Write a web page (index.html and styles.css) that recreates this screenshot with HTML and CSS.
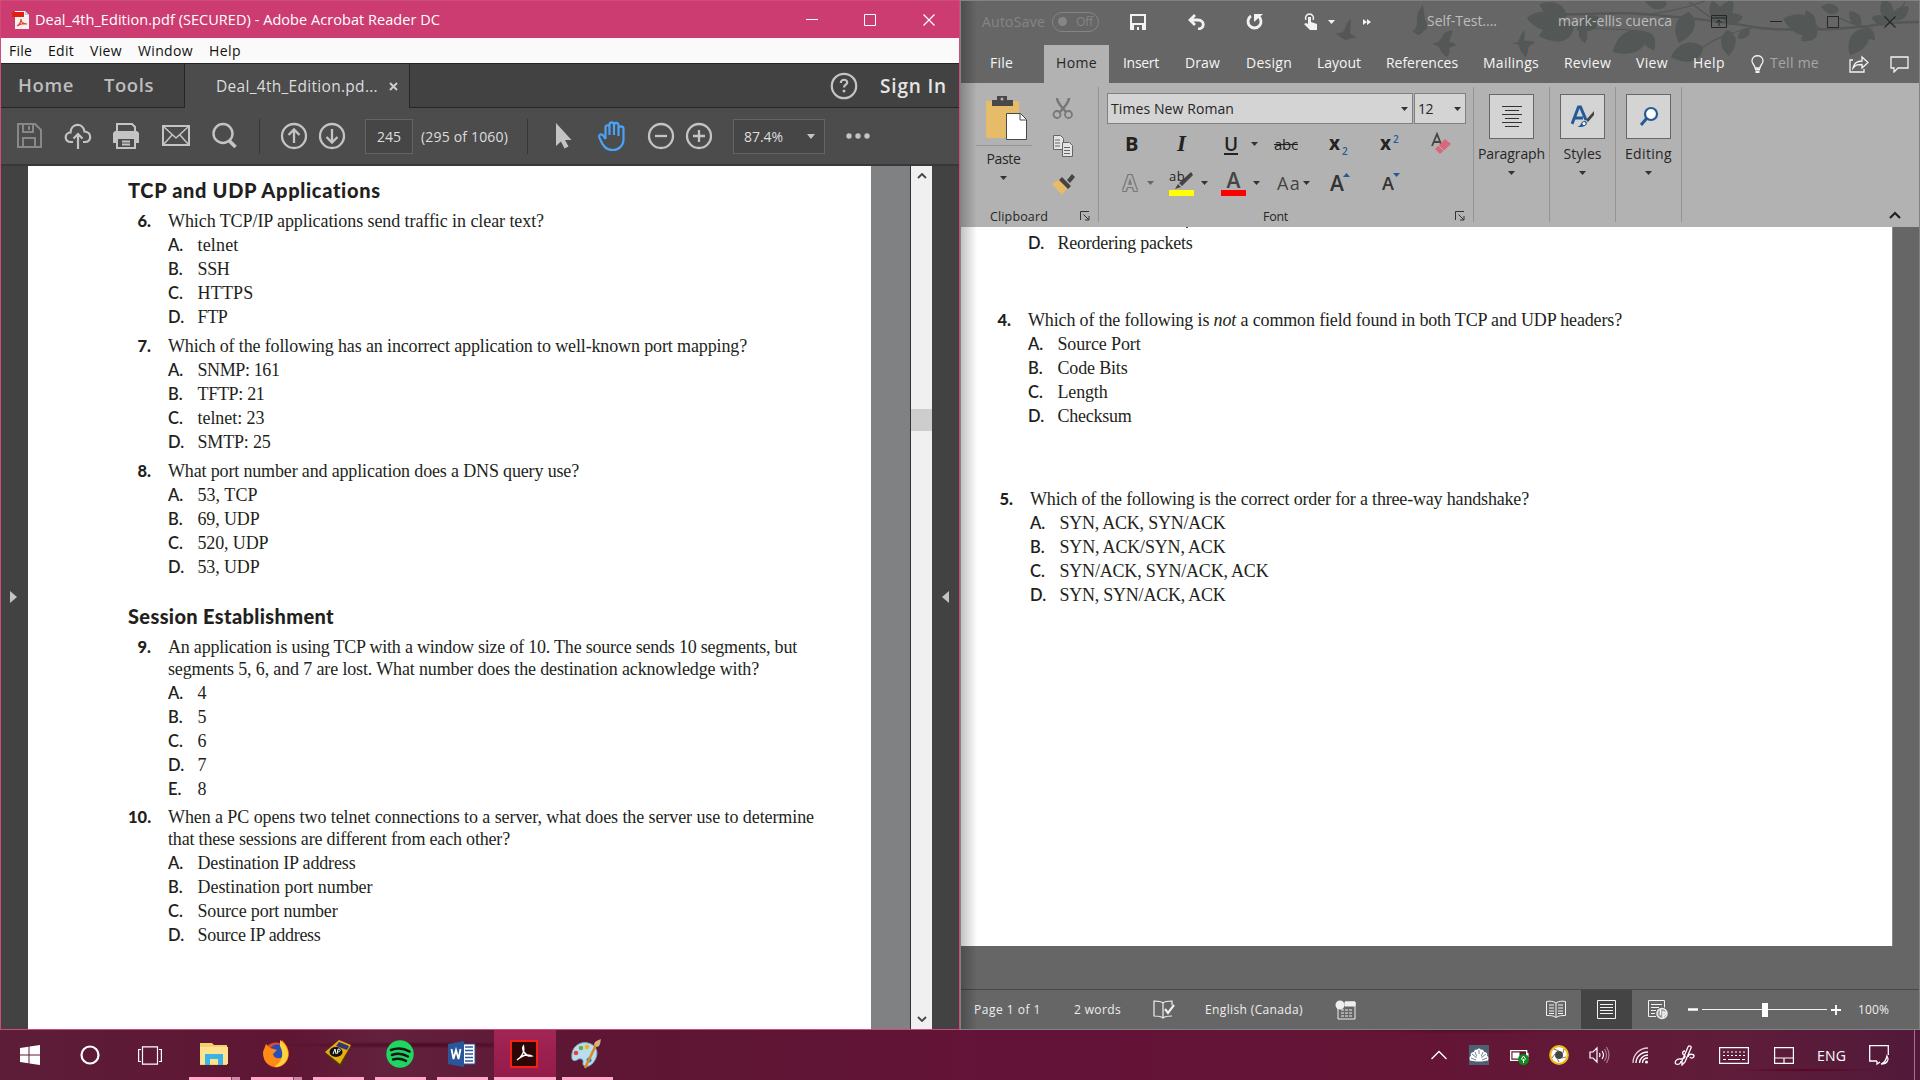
FILE: index.html
```html
<!DOCTYPE html>
<html lang="en">
<head>
<meta charset="utf-8">
<title>Desktop</title>
<link rel="stylesheet" href="styles.css">
</head>
<body>
<div class="desktop">
<div class="windows">

<section class="acrobat">
  <header class="a-title">
    <svg width="20" height="20" viewBox="0 0 20 20"><path d="M4 1h10l4 4v14H4z" fill="#f4f1f0"/><path d="M14 1l4 4h-4z" fill="#ccc"/><path d="M1 2h12v5H1z" fill="#e3200f"/><path d="M6 16c3-2 4-5 4-7 0 3 2 5 6 5-4-1-7 0-10 2z" fill="none" stroke="#e3402f" stroke-width="1.2"/></svg>
    <span data-w="405">Deal_4th_Edition.pdf (SECURED) - Adobe Acrobat Reader DC</span>
    <svg width="12" height="12"><path d="M0 5.500h12" stroke="#fff"/></svg>
    <svg width="12" height="12"><path d="M.5.5h11v11H.5z" fill="none" stroke="#fff"/></svg>
    <svg width="12" height="12"><path d="M.5.5l11 11M11.500.5l-11 11" stroke="#fff" stroke-width="1.2"/></svg>
  </header>
  <nav class="a-menu"><span data-w="23">File</span><span data-w="26">Edit</span><span data-w="32">View</span><span data-w="55">Window</span><span data-w="32">Help</span></nav>
  <div class="a-tabs">
    <div class="a-home"><b data-w="56">Home</b><b data-w="50">Tools</b></div>
    <div class="a-tab"><span data-w="162">Deal_4th_Edition.pd...</span><svg width="9" height="9"><path d="M1 1l7 7M8 1l-7 7" stroke="#ccc" stroke-width="2"/></svg></div>
    <div class="a-sign"><svg width="28" height="28" viewBox="0 0 28 28"><circle cx="14" cy="14" r="12.200" fill="none" stroke="#c4c4c4" stroke-width="2.200"/><path d="M10.800 11c0-4.500 6.700-4 6.400-.4-.2 2-3.200 2.300-3.200 5" fill="none" stroke="#c4c4c4" stroke-width="2.200"/><path d="M12.700 17.800h2.600v2.500h-2.600z" fill="#c4c4c4"/></svg><b data-w="67">Sign In</b></div>
  </div>
  <div class="a-tools">
    <svg width="28" height="28" viewBox="0 0 28 28" fill="none" stroke="#888" stroke-width="2"><path d="M3 2h17l6 6v17H3z"/><path d="M8 2v8h10V2M8 25v-9h12v9M14 4v4" /></svg>
    <svg width="28" height="28" viewBox="0 0 28 28" fill="none" stroke="#c4c4c4" stroke-width="2.200"><path d="M9 20H7c-7 0-7-9-.5-9.500C7 1 19 0 20.500 9.500 28 10 28 20 21 20h-2M14 27V12M9.500 16.500L14 12l4.500 4.500"/></svg>
    <svg width="28" height="28" viewBox="0 0 28 28"><path d="M5 2h15l3 3v5H5z" fill="none" stroke="#c4c4c4" stroke-width="2"/><path d="M1 11l2-2h22l2 2v10h-4v-5H5v5H1z" fill="#c4c4c4"/><path d="M5 16h18v10H5zM10 19.500h8M10 22.500h8" fill="none" stroke="#c4c4c4" stroke-width="2"/></svg>
    <svg width="28" height="28" viewBox="0 0 28 28" fill="none" stroke="#c4c4c4" stroke-width="2"><path d="M1 4h26v19H1z"/><path d="M2 5l12 11L26 5M2 22l8-9M26 22l-8-9" stroke-width="1.500"/></svg>
    <svg width="28" height="28" viewBox="0 0 28 28" fill="none" stroke="#c4c4c4"><circle cx="12" cy="11.500" r="9.500" stroke-width="2.400"/><path d="M18.500 19l6 6" stroke-width="3.500"/></svg>
    <i class="sep"></i>
    <svg width="28" height="28" viewBox="0 0 28 28" fill="none" stroke="#c4c4c4" stroke-width="2.300"><circle cx="14" cy="14" r="12"/><path d="M14 21V8M8.500 13L14 7.500l5.500 5.500"/></svg>
    <svg width="28" height="28" viewBox="0 0 28 28" fill="none" stroke="#c4c4c4" stroke-width="2.300"><circle cx="14" cy="14" r="12"/><path d="M14 7v13M8.500 15l5.500 5.500 5.500-5.500"/></svg>
    <div class="field"><span data-w="24">245</span></div>
    <span data-w="87">(295 of 1060)</span>
    <i class="sep"></i>
    <svg width="18" height="28" viewBox="0 0 18 28"><path d="M1 1v23l5-4.500 3.500 7 4-2-3.500-6.500h6.500z" fill="#c4c4c4"/></svg>
    <svg width="30" height="32" viewBox="0 0 30 32" fill="none" stroke="#4ba3f5" stroke-width="2.200"><path d="M8.500 19V7.500c0-3 4-3 4 0V15 5c0-3.500 4.500-3.500 4.500 0v10V5.500c0-3.500 4.500-3.500 4.500 0V16 9c0-3.500 5-3.500 5 0v10c0 7-5 11-11 11-7 0-10-5-13-12-1.500-4 2.500-4.500 4-2l2 3"/></svg>
    <svg width="28" height="28" viewBox="0 0 28 28" fill="none" stroke="#c4c4c4" stroke-width="2.300"><circle cx="14" cy="14" r="12"/><path d="M8 14h12"/></svg>
    <svg width="28" height="28" viewBox="0 0 28 28" fill="none" stroke="#c4c4c4" stroke-width="2.300"><circle cx="14" cy="14" r="12"/><path d="M8 14h12M14 8v12"/></svg>
    <div class="field zoomf"><span data-w="39">87.4%</span><svg width="8" height="5"><path d="M0 0h8l-4 5z" fill="#c4c4c4"/></svg></div>
    <svg width="26" height="6"><g fill="#c4c4c4"><circle cx="3" cy="3" r="2.700"/><circle cx="12" cy="3" r="2.700"/><circle cx="21" cy="3" r="2.700"/></g></svg>
  </div>
  <div class="a-body">
    <aside class="a-left"><svg width="8" height="14"><path d="M0 1l7 6-7 6z" fill="#c4c4c4"/></svg></aside>
    <main class="a-page doc">
      <h2 data-w="253">TCP and UDP Applications</h2>
      <div class="q"><b>6.</b><p><span data-w="376">Which TCP/IP applications send traffic in clear text?</span></p></div>
      <ul>
        <li><b>A.</b><span data-w="41">telnet</span></li><li><b>B.</b><span data-w="32">SSH</span></li><li><b>C.</b><span data-w="56">HTTPS</span></li><li><b>D.</b><span data-w="30">FTP</span></li>
      </ul>
      <div class="q"><b>7.</b><p><span data-w="579">Which of the following has an incorrect application to well-known port mapping?</span></p></div>
      <ul>
        <li><b>A.</b><span data-w="82">SNMP: 161</span></li><li><b>B.</b><span data-w="67">TFTP: 21</span></li><li><b>C.</b><span data-w="67">telnet: 23</span></li><li><b>D.</b><span data-w="73">SMTP: 25</span></li>
      </ul>
      <div class="q"><b>8.</b><p><span data-w="411">What port number and application does a DNS query use?</span></p></div>
      <ul>
        <li><b>A.</b><span data-w="60">53, TCP</span></li><li><b>B.</b><span data-w="62">69, UDP</span></li><li><b>C.</b><span data-w="71">520, UDP</span></li><li><b>D.</b><span data-w="62">53, UDP</span></li>
      </ul>
      <h2 class="second" data-w="206">Session Establishment</h2>
      <div class="q two first"><b>9.</b><p><span data-w="629">An application is using TCP with a window size of 10. The source sends 10 segments, but</span><br><span data-w="591">segments 5, 6, and 7 are lost. What number does the destination acknowledge with?</span></p></div>
      <ul>
        <li><b>A.</b><span>4</span></li><li><b>B.</b><span>5</span></li><li><b>C.</b><span>6</span></li><li><b>D.</b><span>7</span></li><li><b>E.</b><span>8</span></li>
      </ul>
      <div class="q two"><b>10.</b><p><span data-w="646">When a PC opens two telnet connections to a server, what does the server use to determine</span><br><span data-w="342">that these sessions are different from each other?</span></p></div>
      <ul>
        <li><b>A.</b><span data-w="158">Destination IP address</span></li><li><b>B.</b><span data-w="175">Destination port number</span></li><li><b>C.</b><span data-w="140">Source port number</span></li><li><b>D.</b><span data-w="123">Source IP address</span></li>
      </ul>
    </main>
    <div class="a-gutter"></div>
    <div class="a-scroll">
      <svg width="10" height="6"><path d="M1 5l4-4 4 4" fill="none" stroke="#444" stroke-width="1.800"/></svg>
      <i></i>
      <svg width="10" height="6"><path d="M1 1l4 4 4-4" fill="none" stroke="#444" stroke-width="1.800"/></svg>
    </div>
    <aside class="a-right"><svg width="8" height="14"><path d="M8 1L1 7l7 6z" fill="#c4c4c4"/></svg></aside>
  </div>
</section>

<section class="word">
  <div class="w-head">
    <svg class="leaves" width="958" height="82" viewBox="962 1 958 82" fill="#535756">
      <defs><path id="leaf" d="M0 0C4-10 15-11 26 0 17 9 7 9 0 0z"/></defs>
      <path d="M1413 31c5-2 5-6 5-12 0-7 4-12 6-14l2 15c2 3 3 5 2 9-3 0-5 6-9 6z"/>
      <path d="M1336 33c6 1 8-1 10-4 1-5 4-9 6-10l-1 14c2 2 5 2 6 5-6-1-8 3-11 2-3-2-6-4-10-7z"/>
      <path d="M1432 43c6 1 8-1 11-6 2-5 7-7 11-6l-4 11c3 1 5 0 7 3l-7 3c1 5 0 7-2 9-5-3-7-8-8-10z"/>
      <path d="M1512 43c4 0 7 0 8-3 2-6 4-9 6-9l-1 10c3 0 8-1 11 2-4 1-5 3-7 5 0 5-1 8-3 9-3-5-6-8-6-12z"/>
      <g fill="none" stroke="#535756" stroke-width="1.200">
        <path d="M1560 14c24 1 60-2 84 0 24 2 76 6 116 14 40 4 90 0 110-2 20-4 34-4 50-4" stroke-width="2.500"/>
        <path d="M1704 47c12-8 24-14 50-19M1690 2c10 6 20 16 30 20M1575 26c20 4 50 2 72 6M1866 26v6M1820 28l-4-4M1840 18c10 4 16 8 24 8M1640 15c30-2 50-8 66-14M1890 24c4-10 12-12 16-22"/>
      </g>
      <use href="#leaf" transform="translate(1647 32) rotate(149) scale(1.500)"/><use href="#leaf" transform="translate(1645 32) rotate(61) scale(.8)"/>
      <use href="#leaf" transform="translate(1690 12) rotate(108) scale(1.250)"/><use href="#leaf" transform="translate(1704 47) rotate(163) scale(1.300)"/>
      <use href="#leaf" transform="translate(1728 30) rotate(86)"/><use href="#leaf" transform="translate(1750 28) rotate(135) scale(.6)"/>
      <use href="#leaf" transform="translate(1818 28) rotate(195) scale(1.350)"/><use href="#leaf" transform="translate(1815 28) rotate(-114) scale(.75)"/>
      <use href="#leaf" transform="translate(1818 29) rotate(143) scale(.77)"/><use href="#leaf" transform="translate(1866 28) rotate(119) scale(1.200)"/>
      <use href="#leaf" transform="translate(1864 28) rotate(45) scale(.65)"/><use href="#leaf" transform="translate(1862 25) rotate(-130) scale(.7)"/>
      <use href="#leaf" transform="translate(1560 22) rotate(187) scale(1.250)"/><use href="#leaf" transform="translate(1568 16) rotate(203) scale(1.150)"/>
      <use href="#leaf" transform="translate(1575 26) rotate(164) scale(1.400)"/><use href="#leaf" transform="translate(1582 28) rotate(75) scale(.6)"/>
      <use href="#leaf" transform="translate(1600 17) rotate(150)"/><use href="#leaf" transform="translate(1668 4) rotate(190) scale(.9)"/>
      <use href="#leaf" transform="translate(1720 20) rotate(-110) scale(.8)"/><use href="#leaf" transform="translate(1722 20) rotate(-60) scale(.9)"/><use href="#leaf" transform="translate(1724 22) rotate(-15) scale(.8)"/>
      <use href="#leaf" transform="translate(1840 10) rotate(190) scale(.7)"/><use href="#leaf" transform="translate(1892 20) rotate(-110) scale(.9)"/><use href="#leaf" transform="translate(1894 20) rotate(-40) scale(.8)"/><use href="#leaf" transform="translate(1890 22) rotate(195) scale(.7)"/>
    </svg>
    <div class="w-title">
      <span class="dim" data-w="63">AutoSave</span>
      <span class="toggle"><i></i><span data-w="17">Off</span></span>
      <svg width="16" height="16" viewBox="0 0 16 16"><path d="M0 0h16v16H0z" fill="#f2f2f2"/><path d="M2 2h12v7H2zM4 11h8v5H9v-3H7v3H4z" fill="#666"/></svg>
      <svg width="18" height="16" viewBox="0 0 18 16"><path d="M8 1L3 6l5 5M3 6h8c7 0 7 9 0 9" fill="none" stroke="#f2f2f2" stroke-width="2.800"/></svg>
      <svg width="17" height="17" viewBox="0 0 17 17"><path d="M5 3a6.500 6.500 0 1 0 7 0" fill="none" stroke="#f2f2f2" stroke-width="2.800"/><path d="M8 1h9l-9 8z" fill="#f2f2f2"/></svg>
      <svg width="14" height="17" viewBox="0 0 14 17"><path d="M2 7a4 4 0 1 1 7 0" fill="none" stroke="#f2f2f2" stroke-width="1.500"/><path d="M4 4h3v5l6 2v6H6L0 11l2-1 2 1z" fill="#f2f2f2"/></svg>
      <svg width="7" height="4"><path d="M0 0h7L3.500 4z" fill="#f2f2f2"/></svg>
      <svg width="8" height="6"><path d="M0 0l4 3-4 3zM4 0l4 3-4 3z" fill="#f2f2f2"/></svg>
      <span class="name" data-w="70">Self-Test....</span>
      <span class="name" data-w="114">mark-ellis cuenca</span>
      <svg width="16" height="13" viewBox="0 0 16 13" fill="none" stroke="#262626"><path d="M.5.5h15v12H.5zM.5 3h15M8 11V5M5 8l3-3 3 3"/></svg>
      <svg width="12" height="12"><path d="M0 5.500h12" stroke="#262626"/></svg>
      <svg width="12" height="12"><path d="M.5.500h11v11H.5z" fill="none" stroke="#262626"/></svg>
      <svg width="12" height="12"><path d="M.5.500l11 11M11.500.500l-11 11" stroke="#262626" stroke-width="1.200"/></svg>
    </div>
    <nav class="w-tabs">
      <span data-w="23">File</span><span class="on"><span data-w="41">Home</span></span><span data-w="36">Insert</span><span data-w="35">Draw</span><span data-w="46">Design</span><span data-w="44">Layout</span><span data-w="72">References</span><span data-w="56">Mailings</span><span data-w="47">Review</span><span data-w="32">View</span><span data-w="32">Help</span>
      <svg width="13" height="18" viewBox="0 0 13 18" fill="none" stroke="#f2f2f2" stroke-width="1.300"><path d="M4 13c0-3-3-4-3-7 0-7 11-7 11 0 0 3-3 4-3 7z"/><path d="M4 14.500h5M4.500 17h4" stroke-width="1.800"/></svg>
      <span class="tell" data-w="49">Tell me</span>
      <svg width="20" height="18" viewBox="0 0 20 18" fill="none" stroke="#f2f2f2" stroke-width="1.300"><path d="M4 5H1v12h14v-3"/><path d="M4 13c1-5 4-7 9-7V2l6 5.500-6 5.500V9.500c-4 0-6 0-9 3.500z"/></svg>
      <svg width="19" height="17" viewBox="0 0 19 17" fill="none" stroke="#f2f2f2" stroke-width="1.300"><path d="M1 1h17v11H8l-4 4v-4H1z"/></svg>
    </nav>
  </div>

  <div class="ribbon">
    <div class="clip">
      <div class="clip-top">
        <div class="paste">
          <svg class="board" width="44" height="46" viewBox="0 0 44 46"><path d="M1 6h33v37H1z" fill="#e6bc69"/><path d="M7 5h5V1h10v4h6v6H7z" fill="#484848"/><circle cx="17" cy="4" r="1.500" fill="#b2b2b2"/><path d="M21.500 18.500h14l6 6v20h-20z" fill="#fff" stroke="#484848"/><path d="M35 18.500v6.500h6" fill="none" stroke="#484848"/></svg>
          <hr>
          <span data-w="34">Paste</span>
          <svg width="7" height="4"><path d="M0 0h7L3.500 4z" fill="#333"/></svg>
        </div>
        <div class="clip-tools">
          <svg width="22" height="22" viewBox="0 0 22 22" fill="none" stroke="#777" stroke-width="1.800"><circle cx="5" cy="17.500" r="3.500"/><circle cx="16.500" cy="17.500" r="3.500"/><path d="M5 1c0 5 5 9 9 14M17 1c0 5-5 9-9 14" stroke-width="2.500"/></svg>
          <svg width="22" height="22" viewBox="0 0 22 22" fill="#e4e4e4" stroke="#666"><path d="M1.500.5h7l3 3v11h-10zM3 5h5M3 8h5M3 11h5"/><path d="M10.500 7.500h7l3 3v11h-10zM12 12.500h6M12 15.500h6M12 18.500h6"/></svg>
          <svg width="24" height="22" viewBox="0 0 24 22"><path d="M0 11l8-5 8 8-6 8z" fill="#e6bc69"/><path d="M10 4l9 9-3 3-9-9zM15 7l5-6 3 3-5 6z" fill="#444"/></svg>
        </div>
      </div>
      <div class="cap"><span data-w="58">Clipboard</span><svg width="10" height="10" fill="none" stroke="#333"><path d="M.5 9V.5H9M3.500 3.500l5 5M9 5v4H5" /></svg></div>
    </div>
    <div class="font">
      <div class="boxes"><div class="box"><span data-w="123">Times New Roman</span><svg width="7" height="4"><path d="M0 0h7L3.500 4z" fill="#333"/></svg></div><div class="box sz"><span data-w="15">12</span><svg width="7" height="4"><path d="M0 0h7L3.500 4z" fill="#333"/></svg></div></div>
      <div class="row r1">
        <b>B</b><b class="it">I</b><b class="un">U</b><svg width="7" height="4"><path d="M0 0h7L3.500 4z" fill="#333"/></svg>
        <s data-w="24">abc</s><b class="x">x<sub>2</sub></b><b class="x">x<sup>2</sup></b>
        <svg width="22" height="24" viewBox="0 0 22 24"><path d="M1 14L6 2l4 10M3 10h6" fill="none" stroke="#444" stroke-width="1.800"/><path d="M4 17l10-10 6 5-11 10z" fill="#d9687c"/><path d="M7 13l6 6" stroke="#b2b2b2"/></svg>
      </div>
      <div class="row r2">
        <b class="outl">A</b><svg width="7" height="4"><path d="M0 0h7L3.500 4z" fill="#666"/></svg>
        <span class="hl"><span data-w="16">ab</span><svg width="25" height="26" viewBox="0 0 25 26"><path d="M22 2l2 3-11 11-3-3zM9 14l3 3-6 2z" fill="#444"/><path d="M0 20h25v6H0z" fill="#ff0"/></svg></span><svg width="7" height="4"><path d="M0 0h7L3.500 4z" fill="#333"/></svg>
        <b class="red">A</b><svg width="7" height="4"><path d="M0 0h7L3.500 4z" fill="#333"/></svg>
        <span class="aa" data-w="24">Aa</span><svg width="7" height="4"><path d="M0 0h7L3.500 4z" fill="#333"/></svg>
        <b class="grow">A<svg width="7" height="4"><path d="M0 4h7L3.500 0z" fill="#245a96"/></svg></b><b class="grow shrink">A<svg width="7" height="4"><path d="M0 0h7L3.500 4z" fill="#245a96"/></svg></b>
      </div>
      <div class="cap"><span data-w="25">Font</span><svg width="10" height="10" fill="none" stroke="#333"><path d="M.5 9V.5H9M3.500 3.500l5 5M9 5v4H5" /></svg></div>
    </div>
    <div class="big para"><div class="tile"><svg width="20" height="22"><path d="M0 .5h20M3 4.500h14M0 8.500h20M3 12.500h14M0 16.500h20M3 20.500h14" stroke="#333"/></svg></div><span data-w="67">Paragraph</span><svg width="7" height="4"><path d="M0 0h7L3.500 4z" fill="#333"/></svg></div>
    <div class="big"><div class="tile"><svg width="24" height="24" viewBox="0 0 24 24"><path d="M1 19L7.500 2h2L15 15M4 13h8" fill="none" stroke="#245a96" stroke-width="3"/><path d="M6 22c5-1 3-6 8-6 4 1 2 7-8 6z" fill="#245a96"/><circle cx="13" cy="18.500" r="1.500" fill="#fff"/><path d="M15 15l8-9v4l-6 7z" fill="#444"/></svg></div><span data-w="38">Styles</span><svg width="7" height="4"><path d="M0 0h7L3.500 4z" fill="#333"/></svg></div>
    <div class="big"><div class="tile"><svg width="20" height="22" viewBox="0 0 20 22"><circle cx="12" cy="8" r="6" fill="#fff" stroke="#245a96" stroke-width="2.200"/><path d="M8 12l-6 7" stroke="#245a96" stroke-width="3"/></svg></div><span data-w="47">Editing</span><svg width="7" height="4"><path d="M0 0h7L3.500 4z" fill="#333"/></svg></div>
    <div class="rest"><svg width="12" height="8"><path d="M1 7l5-5 5 5" fill="none" stroke="#222" stroke-width="2.200"/></svg></div>
  </div>

  <div class="w-body">
    <main class="w-page doc">
      <i class="tail"></i>
      <ul><li><b>D.</b><span data-w="135">Reordering packets</span></li></ul>
      <div class="q"><b>4.</b><p data-w="594">Which of the following is <em>not</em> a common field found in both TCP and UDP headers?</p></div>
      <ul>
        <li><b>A.</b><span data-w="83">Source Port</span></li><li><b>B.</b><span data-w="70">Code Bits</span></li><li><b>C.</b><span data-w="50">Length</span></li><li><b>D.</b><span data-w="74">Checksum</span></li>
      </ul>
      <div class="five">
      <div class="q"><b>5.</b><p data-w="499">Which of the following is the correct order for a three-way handshake?</p></div>
      <ul>
        <li><b>A.</b><span data-w="166">SYN, ACK, SYN/ACK</span></li><li><b>B.</b><span data-w="166">SYN, ACK/SYN, ACK</span></li><li><b>C.</b><span data-w="209">SYN/ACK, SYN/ACK, ACK</span></li><li><b>D.</b><span data-w="166">SYN, SYN/ACK, ACK</span></li>
      </ul>
      </div>
    </main>
  </div>
  <footer class="w-status">
    <span data-w="67">Page 1 of 1</span><span data-w="47">2 words</span>
    <svg width="22" height="20" viewBox="0 0 22 20" fill="none" stroke="#eee"><path d="M10 3C8 1 4 1 1 1v15c3 0 7 0 9 2 2-2 5-2 9-2M10 3c2-2 5-2 9-2v4M10 3v15" stroke-width="1.200"/><path d="M12 9l3 4 6-8" stroke-width="2.200"/></svg>
    <span data-w="98">English (Canada)</span>
    <svg width="21" height="20" viewBox="0 0 21 20" fill="none" stroke="#eee"><path d="M3 9v10h17V2H10"/><path d="M10 2h10v4H10z" fill="#eee"/><circle cx="5" cy="5" r="4.500" fill="#eee" stroke="none"/><path d="M6 10h12M6 13h12M6 16h12" stroke-dasharray="3 1"/></svg>
    <svg width="20" height="19" viewBox="0 0 20 19" fill="none" stroke="#f2f2f2"><path d="M10 3C7 1 4 1 .5 1.500v14c4 0 7 0 9.500 2 3-2 6-2 9.500-2v-14C16 1 13 1 10 3zv14M3 5h5M3 8h5M3 11h5M3 13.500h5M12 5h5M12 8h5M12 11h5M12 13.500h5"/></svg>
    <span class="cur"><svg width="19" height="19" fill="none" stroke="#f2f2f2"><path d="M.5.500h18v18H.5zM3 4.500h13M3 7.500h13M3 10.500h13M3 13.500h13"/></svg></span>
    <svg width="20" height="20" viewBox="0 0 20 20" fill="none" stroke="#f2f2f2"><path d="M8 16.500H.5V.5h16v7M3 4.500h11M3 7.500h8M3 10.500h5M3 13.500h4"/><circle cx="14" cy="13.500" r="5" fill="#999" stroke="#eee" stroke-width="1.500"/><path d="M12 9c2 3-1 4 1 6M15 12l3 1-3 4z" stroke-width="1.500"/></svg>
    <svg width="10" height="12"><path d="M0 5.500h10" stroke="#fff" stroke-width="2.500"/></svg>
    <svg width="125" height="16"><path d="M0 7.500h125" stroke="#f2f2f2"/><path d="M60 1h6v14h-6z" fill="#fff"/></svg>
    <svg width="10" height="12"><path d="M0 6h10M5 1v10" stroke="#fff" stroke-width="1.800"/></svg>
    <span data-w="31">100%</span>
  </footer>
</section>
</div>

<footer class="taskbar">
  <div class="cell"><svg width="20" height="20" viewBox="0 0 20 20" fill="#fff"><path d="M0 3l8.500-1.200v7.700H0zM9.500 1.600L20 0v9.500H9.500zM0 10.500h8.500v7.700L0 17zM9.500 10.500H20V20L9.500 18.400z"/></svg></div>
  <div class="cell search"><svg width="20" height="20"><circle cx="10" cy="10" r="8.500" fill="none" stroke="#fff" stroke-width="2.200"/></svg></div>
  <div class="cell views"><svg width="24" height="19" fill="none" stroke="#fff" stroke-width="1.200"><path d="M4.500.8h15v17.400h-15zM3 3.500H.6v12H3M21 3.500h2.400v12H21"/></svg></div>
  <div class="app multi"><svg width="28" height="24" viewBox="0 0 28 24"><path d="M0 1h12l2 2h13v20H0z" fill="#f5cf6b"/><path d="M0 5h28v17H0z" fill="#fde38f"/><path d="M5 23V12h18v11h-5v-6h-8v6z" fill="#3bb3e8"/></svg></div>
  <div class="app multi"><svg width="28" height="28" viewBox="0 0 28 28"><circle cx="14" cy="15" r="12.500" fill="#e8472d"/><circle cx="15" cy="12" r="7.500" fill="#284fb8"/><path d="M1 12L4 4l4 4 7 2-4 4c1 5 6 5 10 3 2-5 0-8-3-11l2-6c6 6 8 12 6 18-5 12-25 12-25-6z" fill="#ff8a16"/><path d="M18 0c8 6 10 15 6 21-4 6-9 6-12 6 7-4 11-12 6-21z" fill="#ffd13b"/></svg></div>
  <div class="app"><svg width="28" height="28" viewBox="0 0 28 28"><path d="M1 14L15 1l12 5-10 21z" fill="#4c3b00"/><path d="M1 12L15 0l12 5-11 19z" fill="#e5ad12"/><path d="M15 2l10 4-2 4-11-4z" fill="#303577"/><ellipse cx="12" cy="12" rx="6.500" ry="5" fill="#111"/><path d="M9 14l2-5 1 5M13 14l1-5c4 0 2 3 0 3" fill="none" stroke="#fff"/></svg></div>
  <div class="app"><svg width="28" height="28" viewBox="0 0 28 28"><circle cx="14" cy="14" r="13.700" fill="#1ed760"/><path d="M5 10q10-3.500 18.500 1.500M6 15q8-3 16 1.500M7 19.500q7-2 13 1.500" fill="none" stroke="#191414" stroke-width="2.500" stroke-linecap="round"/></svg></div>
  <div class="app"><svg width="28" height="26" viewBox="0 0 28 26"><path d="M14 3h13v20H14z" fill="#fff" stroke="#2b579a"/><path d="M17 6h8M17 9.500h8M17 13h8M17 16.500h8M17 20h8" stroke="#2b579a" stroke-width="1.500"/><path d="M0 3l16-3v26L0 23z" fill="#2b579a"/><path d="M3.500 8l2 10L8 9l2.500 9 2-10" fill="none" stroke="#fff" stroke-width="1.800"/></svg></div>
  <div class="app active"><svg width="28" height="28" viewBox="0 0 28 28"><path d="M1 1h26v26H1z" fill="#2d0606" stroke="#f22114" stroke-width="2"/><path d="M7 20c5-3 8-9 6.500-14-2.500 3 2 11 8 10-4-2-9-1-14.500 4z" fill="none" stroke="#fff" stroke-width="1.400"/></svg></div>
  <div class="app"><svg width="32" height="30" viewBox="0 0 32 30"><path d="M2 20C0 8 10 2 18 4c9 2 11 10 7 17-5 9-13 7-12 3 1-5-4-5-6-3-2 1-4 1-5-1z" fill="#b9ddec" stroke="#7ba9bd"/><circle cx="6" cy="14" r="2.300" fill="#d44"/><circle cx="11" cy="9" r="2.300" fill="#6aa943"/><circle cx="17" cy="8" r="2.300" fill="#edb522"/><circle cx="19" cy="21" r="2.500" fill="#357abd"/><path d="M15 29L26 6" stroke="#d8892a" stroke-width="2.500"/><path d="M24 6c0-4 5-5 7-6-1 3 0 7-4 8z" fill="#d7b27c"/></svg></div>
  <div class="tray">
    <svg width="16" height="10"><path d="M.5 9L8 1.500 15.500 9" fill="none" stroke="#fff" stroke-width="1.300"/></svg>
    <svg width="20" height="20" viewBox="0 0 20 20"><path d="M0 0h20v20H0z" fill="#4e6172"/><path d="M1 15.500C0 13 1 11 2 11 1 8 3 7 5 7c0-2 2-3 3-2 1-2 3-2 4 0 1-1 3 0 3 2 2 0 4 1 3 4 1 0 2 2 1 4.500l-6 1H7z" fill="#fff"/><path d="M8 13L3 9M8 12L6 7M10 9V5M12 12l2-5M12 13l5-4M7 15l-5-2M13 15l5-2" stroke="#4e6172" stroke-width=".8"/><circle cx="10" cy="12" r="2.500" fill="#fff"/></svg>
    <svg width="20" height="20" viewBox="0 0 20 20"><path d="M.7 5.700h16v9.600H.7z" fill="none" stroke="#fff" stroke-width="1.300"/><path d="M2.500 7.500h7v6h-7zM17 8h1.500v4H17z" fill="#fff"/><circle cx="13.500" cy="14.500" r="5.500" fill="#0f8a1e"/><path d="M13.500 11l2 3-2 2-2-2zM13.500 14v4" fill="none" stroke="#fff"/></svg>
    <svg width="20" height="20" viewBox="0 0 20 20"><circle cx="10" cy="10" r="8.800" fill="#fff" stroke="#edb91b" stroke-width="2.200"/><circle cx="10" cy="10" r="4" fill="#444"/><path d="M10 6L5 4M6 9l-3 4M8 13l2 4M13 13l4-1M14 8l1-4" stroke="#777"/></svg>
    <svg width="21" height="18" viewBox="0 0 21 18" fill="none" stroke="#fff" stroke-width="1.200"><path d="M1 6h3l4-4v14l-4-4H1zM10.500 7q1 2 0 4M13 5q3 4 0 8"/><path d="M15.500 3q4 6 0 12M17.500 1q5 8 0 16" stroke="#fff" opacity=".45"/></svg>
    <svg width="17" height="17" viewBox="0 0 17 17" fill="none" stroke="#fff" stroke-width="1.300"><path d="M1 16C1 8 7 1 16 1" opacity=".8"/><path d="M4 16C4 10 9 5 16 5M7.500 16c0-4 3.500-8 8.500-8M10.500 16c0-3 2-5 5.500-5"/><circle cx="14.500" cy="15" r="1.500" fill="#fff" stroke="none"/></svg>
    <svg width="21" height="21" viewBox="0 0 21 21" fill="none" stroke="#fff" stroke-width="1.300"><path d="M8 16L14 2c1-2 4-1 3 1L11 17l-3 3zM11 6c-3 0-3 3-1 4s1 4-3 4c-5-1-7 4-5 5s5 0 5-3M14 12c0-4 6-3 6-1s-3 3-4 1"/></svg>
    <svg width="30" height="17" viewBox="0 0 30 17" fill="none" stroke="#fff"><path d="M.6.600h28.800v15.800H.6z" stroke-width="1.200"/><path d="M4 5h22M4 8.500h22" stroke-dasharray="2 2"/><path d="M4 12.500h3M9 12.500h12M23 12.500h3" stroke-width="1.200"/></svg>
    <svg width="20" height="17" fill="none" stroke="#fff" stroke-width="1.200"><path d="M.6.600h18.800v15.800H.6zM.6 11h18.800M10 11v5"/></svg>
    <span data-w="29">ENG</span>
    <svg width="21" height="21" viewBox="0 0 21 21" fill="none" stroke="#fff" stroke-width="1.300"><path d="M8 16H.7V.7h18.600V10M8 16v3l3-2"/><path d="M18 11c2 3 1 8-6 8 3-1 5-3 6-8z"/></svg>
  </div>
</footer>
</div>
<script src="fit.js"></script>
</body>
</html>
```

FILE: styles.css
```css
* { box-sizing: border-box; }
body { margin: 0; width: 1920px; height: 1080px; overflow: hidden; font-family: "Open Sans", "Noto Sans", sans-serif; font-size: 14px; white-space: nowrap; }
svg { display: block; flex: none; }
p, h2, ul { margin: 0; padding: 0; }
li { list-style: none; }

.desktop { display: flex; flex-direction: column; height: 1080px; }
.windows { display: flex; height: 1030px; }

/* Acrobat window */
.acrobat { width: 960px; height: 1030px; border: 1px solid #cf4b7c; display: flex; flex-direction: column; background: #424242; }
.a-title { height: 37px; background: #cc3c71; color: #fff; display: grid; grid-template-columns: 24px 771px 58px 59px 1fr; align-items: center; padding-left: 10px; font-size: 14.5px; }
.a-menu { height: 25px; background: #fafafa; color: #111; display: grid; grid-template-columns: 39px 42px 48px 71px 1fr; padding-left: 8px; align-items: center; font-size: 14px; }
.a-tabs { height: 45px; display: flex; border-top: 1px solid #262626; }
.a-tabs b { font-weight: 600; }
.a-home { width: 184px; border: solid #262626; border-width: 0 1px 1px 0; display: grid; grid-template-columns: 86px 1fr; padding: 0 0 2px 17px; align-items: center; font-size: 18.500px; line-height: 40px; color: #bdbdbd; }
.a-tab { width: 224px; background: #4c4c4c; color: #ddd; display: flex; align-items: center; gap: 11px; padding-left: 31px; font-size: 15.500px; }
.a-sign { flex: 1; border: solid #262626; border-width: 0 0 1px 1px; display: flex; align-items: center; justify-content: flex-end; gap: 22px; padding-right: 12px; color: #e6e6e6; font-size: 19px; }
.a-tools { height: 58px; background: #4c4c4c; border-bottom: 2px solid #383838; color: #ddd; font-size: 14px; display: grid; align-items: center; padding-left: 14px; grid-template-columns: 49px 48px 50px 49px 48px 21px 38px 47px 56px 106px 28px 42px 50px 38px 48px 113px 1fr; }
.sep { width: 1px; height: 35px; background: #363636; }
.field { width: 48px; height: 35px; border: 1px solid #646464; background: #464646; display: flex; align-items: center; justify-content: center; }
.zoomf { width: 92px; justify-content: space-between; padding: 0 9px 0 10px; }
.a-body { flex: 1; display: flex; min-height: 0; }
.a-left { width: 27px; display: flex; align-items: center; padding: 0 0 2px 9px; }
.a-page { width: 843px; background: #fff; padding: 12px 0 0 100px; }
.a-gutter { width: 39px; background: #808183; }
.a-scroll { width: 22px; background: #f0f0f0; border-left: 1px solid #333; display: flex; flex-direction: column; align-items: center; padding: 7px 0; }
.a-scroll i { width: 21px; height: 22px; background: #cdcdcd; margin: 230px 0 auto; }
.a-right { flex: 1; display: flex; align-items: center; padding: 0 0 2px 9px; }

/* Book pages */
.doc { color: #231f20; font-family: "Liberation Serif", serif; font-size: 18px; line-height: 24px; }
.doc h2 { font: 900 20px/24px Lato, sans-serif; width: max-content; margin-bottom: 7px; }
.doc h2.second { margin-top: 25px; }
.doc b { font-family: Lato, sans-serif; font-size: 16.500px; }
.q { display: grid; grid-template-columns: 23px 1fr; column-gap: 17px; margin-top: 5px; }
.q b { text-align: right; font-weight: 900; }
.q p { width: max-content; }
h2 + .q { margin-top: 0; }
.two { line-height: 22px; padding-bottom: 1px; }
.two.first { padding-top: 1px; }
.doc li { display: grid; grid-template-columns: 29.500px max-content; height: 24px; padding-left: 40px; }
.doc li b { font-weight: 600; }

/* Word window */
.word { width: 960px; height: 1030px; border: 1px solid #828282; background: #666; display: flex; flex-direction: column; position: relative; }
.word::after { content: ""; position: absolute; left: 0; top: 0; width: 16px; height: 1028px; background: linear-gradient(90deg, rgba(0,0,0,.24), transparent); }
.w-head { height: 82px; position: relative; }
.leaves { position: absolute; left: 0; top: 0; }
.w-title { position: relative; height: 41px; margin-bottom: 3px; padding-left: 21px; display: grid; align-items: center; grid-template-columns: 70px 78px 57px 59px 58px 24px 35px 64px 131px 153px 59px 57px 57px 1fr; font-size: 14px; color: #bdbdbd; }
.name { position: relative; top: -1px; }
.dim, .toggle { color: #858585; }
.toggle { width: 47px; height: 20px; border: 1px solid #858585; border-radius: 10px; display: flex; align-items: center; gap: 9px; padding-left: 5px; font-size: 12px; }
.toggle i { width: 9px; height: 9px; border-radius: 50%; background: #858585; }
.w-tabs { position: relative; height: 38px; line-height: 36px; padding-left: 29px; display: grid; grid-template-columns: 54px 79px 62px 61px 71px 69px 97px 81px 72px 57px 58px 19px 79px 41px 1fr; font-size: 14px; color: #f5f5f5; }
.w-tabs > svg { align-self: center; }
.w-tabs .on { width: 65px; height: 38px; background: #b2b2b2; color: #262626; padding-left: 12px; }
.tell { color: #a6a6a6; }

.ribbon { height: 144px; background: #b2b2b2; color: #262626; display: flex; padding: 4px 0 5px; }
.ribbon > div { border-right: 1px solid #949494; height: 135px; }
.cap { display: flex; align-items: center; height: 16px; font-size: 12.500px; }
.clip { width: 138px; }
.clip-top { display: flex; height: 121px; gap: 19px; padding-left: 14px; }
.paste { width: 57px; padding-top: 8px; display: flex; flex-direction: column; align-items: center; }
.board { position: relative; left: 3px; }
.paste hr { width: 56px; height: 1px; margin: 4px 0 2px; border: 0; background: #949494; }
.paste > span { line-height: 22px; }
.paste svg:last-child { margin-top: 6px; }
.clip-tools { display: flex; flex-direction: column; padding: 10px 0 0 1px; gap: 16px; }
.clip .cap { padding: 0 8px 0 29px; justify-content: space-between; }
.font { width: 375px; }
.boxes { display: flex; gap: 1px; padding: 6px 0 0 8px; height: 38px; }
.box { width: 306px; height: 31px; border: 1px solid #808080; background: #d4d4d4; display: flex; align-items: center; justify-content: space-between; padding: 0 4px 0 3px; font-size: 14px; }
.box.sz { width: 52px; }
.row { display: grid; align-items: center; height: 38px; line-height: 38px; color: #222; }
.r1 { padding-left: 26px; height: 38px; grid-template-columns: 52px 47px 27px 23px 55px 51px 51px 1fr; font-size: 20px; }
.it { font-family: "Liberation Serif", serif; font-style: italic; font-size: 23px; }
.un { width: max-content; line-height: 21px; border-bottom: 2px solid #222; font-size: 19px; font-weight: 600; height: 21px; }
.r1 s { font-size: 15px; }
.x { font-size: 19px; line-height: 24px; height: 26px; }
.x sub, .x sup { font-size: 10px; color: #245a96; line-height: 0; margin-left: 2px; font-weight: 600; }
.r2 { padding-left: 24px; grid-template-columns: 24px 22px 32px 20px 32px 24px 26px 27px 52px 1fr; }
.outl { color: #b2b2b2; font-size: 21px; font-weight: 600; text-shadow: -1px -1px #777, 1px -1px #777, -1px 1px #777, 1px 1px #777; }
.hl { display: grid; width: 25px; height: 26px; }
.hl > * { grid-area: 1 / 1; }
.hl > span { font-size: 13px; line-height: 12px; width: max-content; height: 12px; }
.hl svg { z-index: 1; }
.red { width: 25px; height: 26px; line-height: 21px; border-bottom: 6px solid red; text-align: center; font-size: 21px; font-weight: 600; color: #444; }
.aa { font-size: 18px; width: max-content; color: #444; }
.grow { display: flex; align-items: flex-start; font-size: 21px; line-height: 40px; font-weight: 600; color: #333; }
.grow svg { margin: 10px 0 0 -1px; }
.shrink { font-size: 18px; }
.font .cap { padding: 0 8px 0 164px; justify-content: space-between; margin-top: 7px; }
.big { width: 66px; display: flex; flex-direction: column; align-items: center; padding-top: 7px; }
.big.para { width: 76px; }
.tile { width: 45px; height: 45px; border: 1px solid #666; background: #d4d4d4; display: grid; place-items: center; margin-bottom: 3px; }
.big > span { line-height: 23px; }
.big > svg { margin-top: 6px; }
.ribbon > .rest { flex: 1; border: 0; display: flex; justify-content: flex-end; align-items: flex-end; padding: 0 18px 3px 0; }

.w-body { height: 762px; }
.w-page { width: 931.500px; height: 719px; background: #fff; padding-left: 27px; border-right: 1px solid #888; }
.tail { display: block; width: 2px; height: 1px; background: #445; margin: 0 0 3px 198px; }
.w-page .q { margin-top: 53px; }
.w-page > .five { margin-top: 59px; padding-left: 2px; }
.w-page .five .q { margin-top: 0; }
.w-status { height: 40px; border-top: 1px solid #484848; color: #eee; font-size: 12px; display: grid; align-items: center; padding-left: 13px; grid-template-columns: 100px 79px 52px 130px 211px 35px 67px 40px 14px 129px 27px 1fr; }
.cur { width: 51px; height: 39px; background: #444; display: grid; place-items: center; }

/* Taskbar */
.taskbar { height: 50px; display: flex; padding-left: 5px; color: #fff; background: radial-gradient(ellipse at 94% 80%, #5b0020 0, transparent 3%), radial-gradient(ellipse at 22% 30%, #4a0820 0, transparent 7%), radial-gradient(ellipse at 76% 0, #521028 0, transparent 6%), linear-gradient(90deg, #5d1d38, #5e1633 15%, #63213d 20%, #5d1633 30%, #641338 55%, #641535 75%, #5f1d3a 90%, #52193a); }
.cell { width: 50px; display: grid; place-items: center; }
.search { width: 70px; }
.views { width: 59px; padding-right: 9px; }
.app { width: 51px; display: grid; place-items: center; border-bottom: 3px solid #ffaacb; padding: 1px 2px 0 0; margin-right: 11px; }
.app.multi { border-image: linear-gradient(90deg, #ffaacb 78%, #7a4a60 78%, #7a4a60 80%, #d088a8 80%) 3; border-width: 0 0 3px; border-style: solid; }
.cell + .app { margin-left: 5px; }
.app.active { width: 62px; margin: 0 6px 0 -5px; background: linear-gradient(#a22556, #931b4a); }
.app:nth-last-child(2) { padding-right: 4px; }
.tray { margin-left: auto; margin-right: 5px; width: 484px; border-right: 1px solid #a6718a; display: grid; align-items: center; grid-template-columns: 38px 41px 39px 40px 43px 42px 45px 55px 43px 52px 1fr; font-size: 14px; }
```

FILE: fit.js
```js
// Tracks each label so that it spans its measured width.
document.querySelectorAll('[data-w]').forEach(function (el) {
  var r = document.createRange();
  r.selectNodeContents(el);
  var w = r.getBoundingClientRect().width;
  el.style.letterSpacing = ((el.dataset.w - w) / el.textContent.length).toFixed(3) + 'px';
});
```
